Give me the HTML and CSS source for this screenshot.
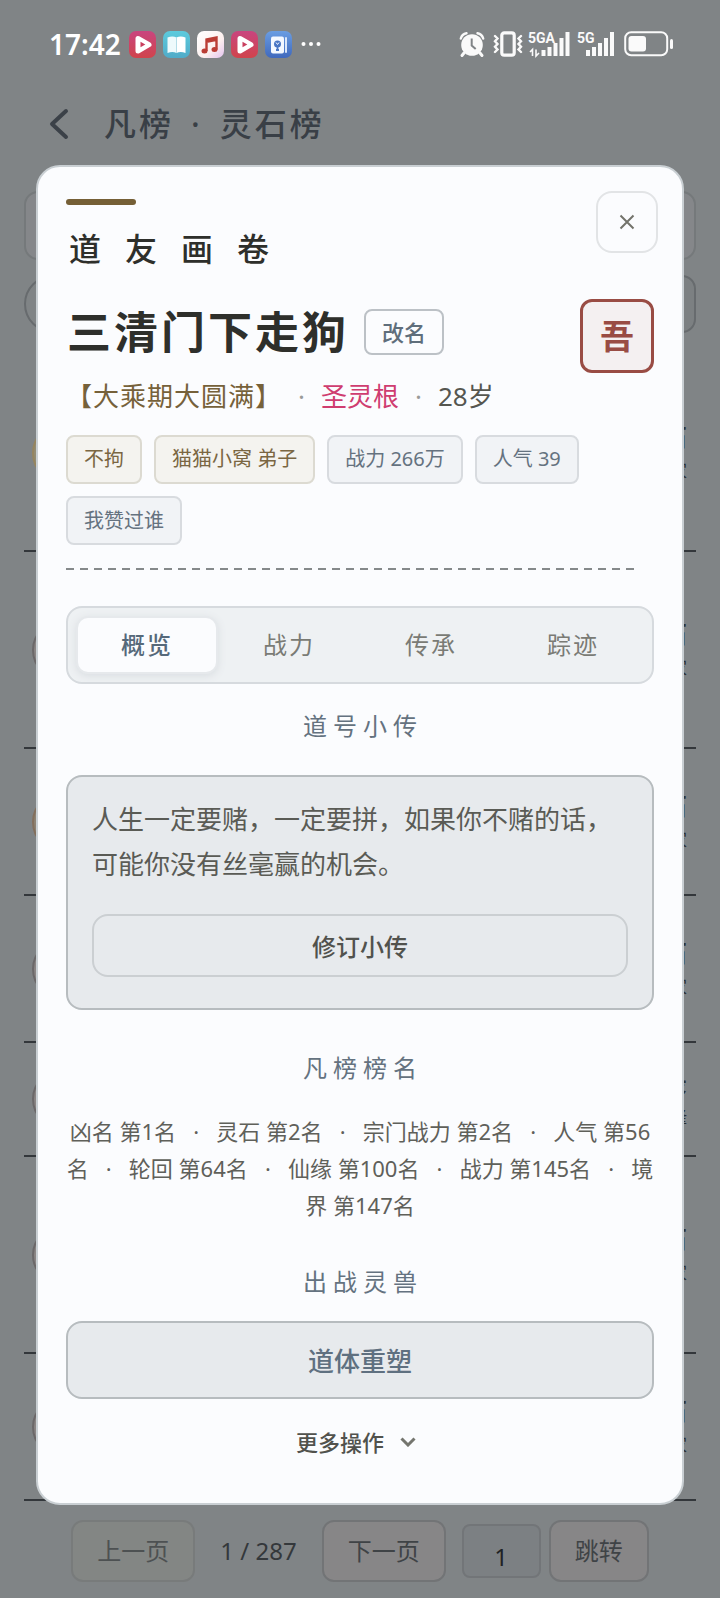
FILE: index.html
```html
<!DOCTYPE html>
<html lang="zh-CN">
<head>
<meta charset="utf-8">
<meta name="viewport" content="width=device-width, initial-scale=1">
<title>凡榜 · 灵石榜</title>
<link rel="stylesheet" href="styles.css">
</head>
<body>
<div class="page">
  <div class="status">
    <span class="clock">17:42</span>
    <span class="apps">
      <svg class="app" viewBox="0 0 27 27"><defs><linearGradient id="red" x2="0" y2="1"><stop stop-color="#c9457f"/><stop offset="1" stop-color="#d0444c"/></linearGradient></defs><rect width="27" height="27" rx="7" fill="url(#red)"/><path d="M9 7.500v12.500L20 13.700z" fill="#fff" stroke="#fff" stroke-width="5" stroke-linejoin="round"/><path d="M11.500 10.800v5.400l4.800-2.700z" fill="#c93f5e"/></svg>
      <svg class="app" viewBox="0 0 27 27"><defs><linearGradient id="cyan" x2="0" y2="1"><stop stop-color="#5ccbdd"/><stop offset="1" stop-color="#50abc8"/></linearGradient></defs><rect width="27" height="27" rx="7" fill="url(#cyan)"/><path d="M4.500 6.500q5-2 9 0v15.500q-4-2-9 0z" fill="#eefafc"/><path d="M13.500 6.500q4-2 9 0v15.500q-5-2-9 0z" fill="#fff"/><path d="M13.500 7v15" stroke="#b5dde8" stroke-width="1"/></svg>
      <svg class="app" viewBox="0 0 27 27"><defs><linearGradient id="pale" x2="1" y2="1"><stop stop-color="#fff"/><stop offset=".6" stop-color="#fdf0ee"/><stop offset="1" stop-color="#e3c2ee"/></linearGradient></defs><rect width="27" height="27" rx="7" fill="url(#pale)"/><path d="M9.500 20V8.500L19.500 6.500v12M9.500 10.800l10-2" fill="none" stroke="#bb3d35" stroke-width="2.400"/><ellipse cx="7.500" cy="20" rx="3" ry="2.500" fill="#bb3d35"/><ellipse cx="17.500" cy="18.500" rx="3" ry="2.500" fill="#bb3d35"/></svg>
      <svg class="app" viewBox="0 0 27 27"><rect width="27" height="27" rx="7" fill="url(#red)"/><path d="M9 7.500v12.500L20 13.700z" fill="#fff" stroke="#fff" stroke-width="5" stroke-linejoin="round"/><path d="M11.500 10.800v5.400l4.800-2.700z" fill="#c93f5e"/></svg>
      <svg class="app" viewBox="0 0 27 27"><defs><linearGradient id="blue" x2="0" y2="1"><stop stop-color="#6a9de2"/><stop offset="1" stop-color="#4069bd"/></linearGradient></defs><rect width="27" height="27" rx="7" fill="url(#blue)"/><rect x="6" y="5.500" width="13" height="17" rx="2" fill="#f4f8ff"/><path d="M21 7v14" stroke="#dbe7fa" stroke-width="2" stroke-linecap="round"/><circle cx="12.500" cy="13" r="3.500" fill="#4a76c4"/><path d="M11 11.500l1.500 2 1.500-2" fill="none" stroke="#f4f8ff" stroke-width="1"/><path d="M12.500 14v5M11 19h3" stroke="#4a76c4" stroke-width="1.800"/></svg>
    </span>
    <svg class="dots" viewBox="0 0 20 6"><circle cx="2.500" cy="3" r="2"/><circle cx="10" cy="3" r="2"/><circle cx="17.500" cy="3" r="2"/></svg>
    <span class="signals">
      <svg class="alarm" viewBox="0 0 26 26"><circle cx="13" cy="14" r="10.800" fill="#fafafa"/><path d="M1.800 7.500Q3 3 7.500 2.200M24.200 7.500Q23 3 18.500 2.200" fill="none" stroke="#fafafa" stroke-width="2.400" stroke-linecap="round"/><path d="M5 22l-2 2.500M21 22l2 2.500" stroke="#fafafa" stroke-width="3" stroke-linecap="round"/><path d="M12.700 7.500v7l4 3.500" fill="none" stroke="#808487" stroke-width="2"/></svg>
      <svg class="vibrate" viewBox="0 0 30 26"><rect x="8.800" y="1.800" width="12.400" height="22.400" rx="2.500" fill="none" stroke="#fafafa" stroke-width="3.200"/><path d="M2 5l2.500 2.500L2 10.300 4.500 13 2 15.800l2.500 2.700L2 21M28 5l-2.500 2.500 2.500 2.800-2.500 2.700 2.500 2.800-2.500 2.700L28 21" fill="none" stroke="#fafafa" stroke-width="2.400" stroke-linecap="round"/></svg>
      <svg class="cell wide" viewBox="0 0 43 26"><text x="0" y="12">5GA</text><path d="M4.500 25v-6.500L2 21M8 18.500V25l3-3" fill="none" stroke="#fafafa" stroke-width="1.600"/><path d="M15.500 25v-6M21.500 25v-9M27.500 25V12M33.500 25V7M39.500 25V1" stroke="#fafafa" stroke-width="4"/></svg>
      <svg class="cell" viewBox="0 0 38 26"><text x="0" y="12">5G</text><path d="M11 25v-6M17 25v-9M23 25V12M29 25V7M35 25V1" stroke="#fafafa" stroke-width="4"/></svg>
      <svg class="battery" viewBox="0 0 50 26"><rect x="1.200" y="1.200" width="42" height="23" rx="6" fill="none" stroke="#fafafa" stroke-width="2"/><rect x="4.500" y="5" width="17.500" height="15.500" rx="3" fill="#fafafa"/><path d="M47.500 9.500v7" stroke="#fafafa" stroke-width="3" stroke-linecap="round"/></svg>
    </span>
  </div>

  <header class="topbar">
    <button class="back" aria-label="返回"><svg viewBox="0 0 20 32"><path d="M17 3L3 16l14 13"/></svg></button>
    <h1 class="board"><span>凡榜</span><span>·</span><span>灵石榜</span></h1>
  </header>

  <main>
    <div class="tools">
      <div class="search"></div>
      <div class="filters"><span class="round"></span><span class="pick"></span></div>
    </div>
    <ul class="list">
      <li class="row tall"><span class="avatar gold"></span><span class="score"><b>石</b><small>家</small></span></li>
      <li class="row tall"><span class="avatar"></span><span class="score"><b>石</b><small>家</small></span></li>
      <li class="row"><span class="avatar bronze"></span><span class="score"><b>石</b><small>家</small></span></li>
      <li class="row"><span class="avatar"></span><span class="score"><b>石</b><small>家</small></span></li>
      <li class="row short"><span class="avatar"></span><span class="score"><b>录</b><small>隆</small></span></li>
      <li class="row tall"><span class="avatar"></span><span class="score"><b>石</b><small>家</small></span></li>
      <li class="row"><span class="avatar"></span><span class="score"><b>石</b><small>家</small></span></li>
    </ul>
    <nav class="pager" aria-label="分页">
      <button class="page-btn off">上一页</button>
      <span class="count">1 / 287</span>
      <button class="page-btn">下一页</button>
      <span class="jump"><input class="page-no" value="1" aria-label="页码"><button class="page-btn">跳转</button></span>
    </nav>
  </main>
</div>

<div class="overlay">
  <section class="dialog" role="dialog" aria-labelledby="dialog-title">
    <button class="close" aria-label="关闭"><svg viewBox="0 0 16 16"><path d="M1.500 1.500l13 13M14.500 1.500l-13 13"/></svg></button>
    <div class="accent"></div>
    <h2 class="title" id="dialog-title">道友画卷</h2>

    <div class="identity">
      <div class="who">
        <div class="name-line"><h3 class="name">三清门下走狗</h3><button class="rename">改名</button></div>
        <p class="meta"><span class="realm">【大乘期大圆满】</span><span class="sep">·</span><span class="root">圣灵根</span><span class="sep">·</span><span>28岁</span></p>
      </div>
      <div class="seal">吾</div>
    </div>

    <div class="chips">
      <span class="chip gold">不拘</span>
      <span class="chip gold">猫猫小窝 弟子</span>
      <span class="chip">战力 266万</span>
      <span class="chip">人气 39</span>
      <button class="chip">我赞过谁</button>
    </div>
    <div class="dash"></div>

    <div class="tabs" role="tablist">
      <button class="tab active" role="tab" aria-selected="true">概览</button>
      <button class="tab" role="tab">战力</button>
      <button class="tab" role="tab">传承</button>
      <button class="tab" role="tab">踪迹</button>
    </div>

    <h4 class="heading first">道号小传</h4>
    <div class="bio">
      <p class="bio-text">人生一定要赌，一定要拼，如果你不赌的话，可能你没有丝毫赢的机会。</p>
      <button class="edit">修订小传</button>
    </div>

    <h4 class="heading">凡榜榜名</h4>
    <p class="ranks">凶名 第1名&nbsp;&nbsp;&nbsp;·&nbsp;&nbsp; 灵石 第2名&nbsp;&nbsp;&nbsp;·&nbsp;&nbsp; 宗门战力 第2名&nbsp;&nbsp;&nbsp;·&nbsp;&nbsp; 人气 第56名&nbsp;&nbsp;&nbsp;·&nbsp;&nbsp; 轮回 第64名&nbsp;&nbsp;&nbsp;·&nbsp;&nbsp; 仙缘 第100名&nbsp;&nbsp;&nbsp;·&nbsp;&nbsp; 战力 第145名&nbsp;&nbsp;&nbsp;·&nbsp;&nbsp; 境界 第147名</p>

    <h4 class="heading">出战灵兽</h4>
    <button class="reshape">道体重塑</button>
    <button class="more">更多操作<svg viewBox="0 0 16 10"><path d="M1.500 1.500L8 8l6.500-6.500"/></svg></button>
  </section>
</div>
</body>
</html>
```

FILE: styles.css
```css
* { box-sizing: border-box; }

body {
  margin: 0;
  background: #808486;
  color: #555650;
  font-family: "Noto Sans", "Noto Sans CJK SC", sans-serif;
}

h1, h2, h3, h4, p, ul { margin: 0; padding: 0; }
button, input { font: inherit; color: inherit; margin: 0; padding: 0; background: none; }
button { cursor: pointer; }

/* Dimmed page */
.page { min-height: 100vh; color: #3b4046; overflow: hidden; }

.status {
  display: flex;
  align-items: center;
  height: 88px;
  padding: 0 46px 0 49px;
  color: #fff;
}
.clock { font-size: 28px; line-height: 28px; font-weight: 600; }
.apps { display: flex; gap: 7px; margin-left: 8px; }
.app { width: 27px; height: 27px; }
.dots { width: 20px; height: 6px; margin-left: 9px; fill: #fff; }
.signals { display: flex; align-items: center; margin-left: auto; }
.signals svg { height: 26px; overflow: visible; }
.signals text { font: 700 14px "Liberation Sans Narrow", Roboto, sans-serif; fill: #fafafa; }
.alarm { width: 26px; margin-right: 8px; }
.vibrate { width: 30px; margin-right: 5px; }
.cell { width: 38px; }
.cell.wide { width: 43px; margin-right: 6px; }
.battery { width: 50px; margin-left: 9px; }

.topbar { display: flex; align-items: center; height: 72px; padding: 0 48px; gap: 34px; }
.back { display: flex; border: 0; }
.back svg { width: 22px; height: 32px; fill: none; stroke: #3b4148; stroke-width: 4; stroke-linecap: round; stroke-linejoin: round; }
.board { display: flex; gap: 17px; font-size: 32px; line-height: 48px; font-weight: 500; letter-spacing: 3px; color: #393f46; }

.tools { display: grid; gap: 15px; padding: 31px 24px 22px; }
.search { height: 69px; border: 2px solid #75797b; border-radius: 14px; background: #85878a; }
.filters { display: flex; justify-content: space-between; }
.round, .pick { height: 58px; border: 2px solid #676b6e; }
.round { width: 58px; border-radius: 50%; }
.pick { width: 120px; border-radius: 14px; background: #7c8082; }

.list { list-style: none; margin: 0 24px; }
.row {
  display: flex;
  align-items: center;
  justify-content: space-between;
  min-height: 147px;
  padding: 0 9px 0 8px;
  border-bottom: 2px solid #33373b;
}
.row.tall { min-height: 197px; }
.row.short { min-height: 114px; }
.avatar { width: 60px; height: 60px; border: 2px solid #6b6869; border-radius: 50%; background: #8a8584; }
.avatar.gold { border-color: #96855f; background: #938c74; }
.avatar.bronze { border-color: #836f5c; background: #8d8273; }
.score { display: grid; gap: 4px; justify-items: end; color: #2c3033; }
.score b { font-size: 24px; line-height: 32px; }
.score small { font-size: 17px; line-height: 28px; }

.pager { display: flex; justify-content: center; align-items: center; gap: 25px; padding: 19px 24px 15px; color: #34383b; }
.page-btn { height: 62px; padding: 0 24px; border: 2px solid #727476; border-radius: 12px; background: #878687; font-size: 24px; line-height: 34px; color: #3f4346; }
.page-btn.off { color: #4d5152; background: #838684; border-color: #787b7b; }
.count { font-size: 24px; line-height: 34px; }
.jump { display: flex; align-items: center; gap: 8px; margin-left: -9px; }
.page-no { width: 79px; height: 54px; padding-top: 10px; border: 2px solid #727578; border-radius: 8px; background: #7c8083; font-size: 24px; text-align: center; color: #1f2224; }

/* Dialog */
.overlay { position: absolute; inset: 0; padding: 165px 36px 0; }
.dialog {
  position: relative;
  padding: 32px 28px 38px;
  border: 2px solid #c9cfd3;
  border-radius: 24px;
  background: #fbfcfe;
}
.close {
  position: absolute;
  top: 24px;
  right: 24px;
  display: grid;
  place-items: center;
  width: 62px;
  height: 62px;
  border: 2px solid #e2e4e6;
  border-radius: 16px;
}
.close svg { width: 16px; height: 16px; fill: none; stroke: #73736b; stroke-width: 2; }
.accent { width: 70px; height: 6px; border-radius: 3px; background: #755f36; }
.title { margin-top: 20px; padding-left: 3px; font-size: 32px; line-height: 48px; font-weight: 500; letter-spacing: 24px; color: #2e2f2b; }

.identity { display: flex; justify-content: space-between; margin-top: 26px; }
.name-line { display: flex; align-items: center; gap: 15px; height: 66px; }
.name { padding-left: 1px; font-size: 44px; line-height: 66px; font-weight: 700; letter-spacing: 3px; color: #2e2f2b; }
.rename { height: 46px; padding: 0 16px; border: 2px solid #bcc1c6; border-radius: 8px; font-size: 22px; line-height: 32px; font-weight: 500; color: #5f6e7b; }
.meta { display: flex; align-items: center; gap: 16px; margin-top: 11px; font-size: 26px; line-height: 40px; }
.realm { color: #76613a; letter-spacing: 1px; }
.root { color: #cf3d70; }
.sep { color: #999b98; }
.seal {
  display: grid;
  place-items: center;
  width: 74px;
  height: 74px;
  border: 3px solid #994c44;
  border-radius: 12px;
  background: #f4f0f1;
  font-size: 34px;
  line-height: 44px;
  font-weight: 700;
  color: #994c44;
}

.chips { display: flex; flex-wrap: wrap; gap: 12px; margin-top: 19px; }
.chip { height: 49px; padding: 0 16px; border: 2px solid #d8dbdf; border-radius: 8px; background: #f1f3f6; font-size: 20px; line-height: 44px; color: #65727f; }
.chip.gold { border-color: #dcdad1; background: #f4f3ef; color: #7a6642; }
.dash { height: 2px; margin: 23px 16px 0 0; background: repeating-linear-gradient(90deg, #85898a 0 8px, transparent 8px 14px); }

.tabs { display: grid; grid-template-columns: repeat(4, 1fr); margin-top: 36px; padding: 8px; border: 2px solid #d6dade; border-radius: 16px; background: #eef1f3; }
.tab { height: 58px; border: 2px solid transparent; border-radius: 12px; font-size: 24px; line-height: 36px; letter-spacing: 2px; color: #7a7b75; }
.tab.active { border-color: #e6e9ec; background: #fbfcfe; box-shadow: 0 2px 8px #d9dde1; font-weight: 500; color: #56697a; }

.heading { margin-top: 40px; text-indent: 6px; font-size: 24px; line-height: 36px; font-weight: 400; letter-spacing: 6px; text-align: center; color: #647280; }
.heading.first { margin-top: 24px; }

.bio { margin-top: 31px; padding: 20px 24px 31px; border: 2px solid #b7bcbf; border-radius: 16px; background: #e7eaed; }
.bio-text { font-size: 26px; line-height: 45px; color: #5a5b55; }
.edit { display: block; width: 100%; height: 63px; margin-top: 27px; border: 2px solid #cbcfd2; border-radius: 16px; font-size: 24px; font-weight: 500; color: #51524d; }

.ranks { margin-top: 27px; font-size: 22px; line-height: 37px; text-align: center; color: #5f605a; }

.reshape { display: block; width: 100%; height: 78px; margin-top: 21px; border: 2px solid #b7bcbf; border-radius: 16px; background: #e7eaed; font-size: 26px; font-weight: 500; color: #5f7080; }
.more { display: flex; align-items: center; gap: 16px; margin: 20px auto 0; padding-right: 8px; border: 0; font-size: 22px; line-height: 46px; font-weight: 500; color: #51524d; }
.more svg { width: 16px; height: 10px; fill: none; stroke: #74756e; stroke-width: 3; }
```
